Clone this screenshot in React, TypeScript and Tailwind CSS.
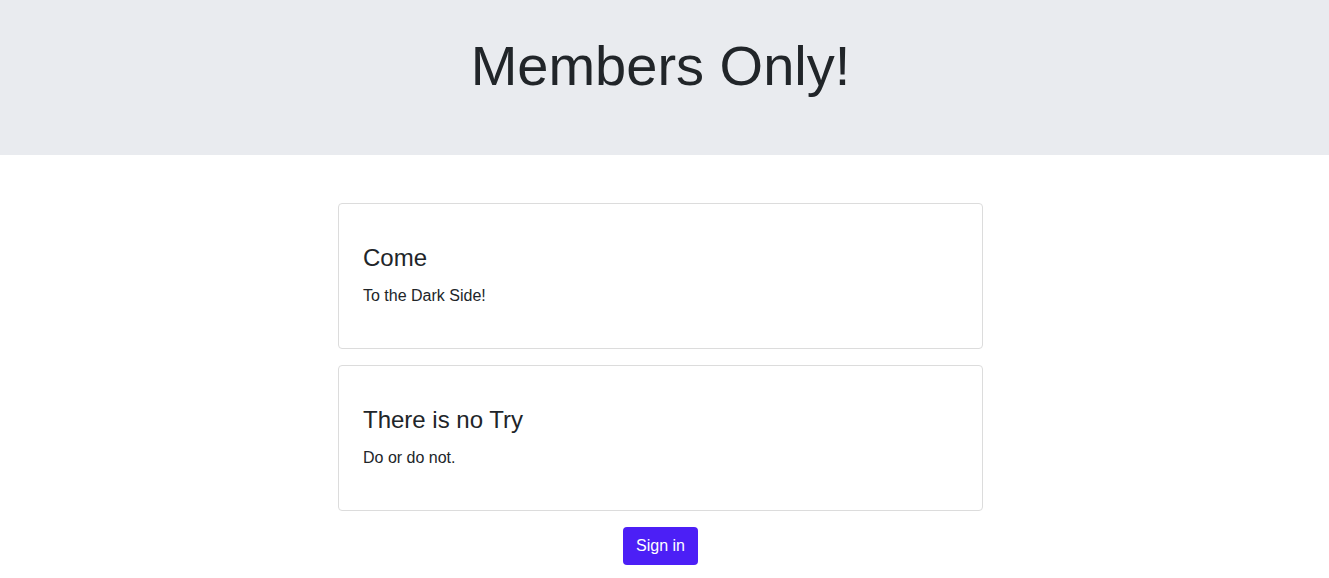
export default function App() {
  const cards = [
    { title: "Come", text: "To the Dark Side!" },
    { title: "There is no Try", text: "Do or do not." },
  ];

  return (
    <div className="min-h-screen bg-white font-['Liberation_Sans',Arial,sans-serif] text-[#212529]">
      <header className="bg-[#e9ebef] pt-8 pb-14">
        <h1 className="pr-2 text-center text-[56px] leading-[67px] font-normal">
          Members Only!
        </h1>
      </header>

      <main className="flex flex-col items-center pt-12 pr-2">
        <div className="flex w-[645px] flex-col gap-4">
          {cards.map((c) => (
            <div
              key={c.title}
              className="rounded-[4px] border border-[#dcdcdc] px-6 pt-[39px] pb-10"
            >
              <h5 className="mb-3 text-[24px] leading-[29px] font-normal">
                {c.title}
              </h5>
              <p className="text-[16px] leading-6">{c.text}</p>
            </div>
          ))}
        </div>
        <button className="mt-4 rounded-[4px] bg-[#4c1ff6] px-[13px] py-[7px] text-[16px] leading-6 text-white">
          Sign in
        </button>
      </main>
    </div>
  );
}
